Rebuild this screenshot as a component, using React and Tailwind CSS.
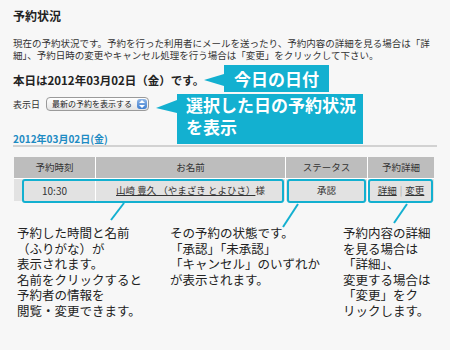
const JP = { fontFamily: '"Noto Sans CJK JP", "Liberation Sans", sans-serif' };

const Callout = ({ className, children }) => (
  <div className={`bg-[#13b0d0] text-white font-bold text-[17px] ${className}`}>{children}</div>
);

const App = () => {
  return (
    <div style={JP} className="w-[450px] h-[350px] overflow-hidden bg-[#f7f7f7] text-[#333] px-[13px]">
      <h1 className="pt-[8px] text-[12px] leading-[16px] font-bold text-[#222]">予約状況</h1>

      <p className="mt-[13px] text-[9.5px] leading-[12px] whitespace-nowrap text-[#333]">
        現在の予約状況です。予約を行った利用者にメールを送ったり、予約内容の詳細を見る場合は「詳
        <br />
        細」、予約日時の変更やキャンセル処理を行う場合は「変更」をクリックして下さい。
      </p>

      {/* today */}
      <div className="mt-[4px] flex items-center h-[27px]">
        <div className="w-[191px] pt-[3px] text-[11.5px] leading-[16px] font-bold text-[#222] whitespace-nowrap">
          本日は2012年03月02日（金）です。
        </div>
        <svg width="20" height="27" className="block shrink-0">
          <polygon points="0,15 20,9 20,21" fill="#13b0d0" />
        </svg>
        <Callout className="w-[105px] h-[27px] flex items-center justify-center leading-none">今日の日付</Callout>
      </div>

      {/* select day */}
      <div className="mt-[2px] flex items-start border-b-2 border-[#d2d2d2]">
        <div className="w-[143px]">
          <div className="mt-[3px] flex items-center h-[14px]">
            <span className="w-[33px] text-[9px] leading-none text-[#333]">表示日</span>
            <div className="relative w-[103px] h-[14px] rounded-[4px] border border-[#9a9a9a] bg-gradient-to-b from-white to-[#e4e4e4] flex items-center pl-[5px]">
              <span className="text-[8px] leading-none text-[#222] whitespace-nowrap">最新の予約を表示する</span>
              <div className="absolute right-[1px] top-[1px] w-[10px] h-[10px] rounded-[3px] bg-gradient-to-b from-[#8fb6e6] to-[#3f7fd0] flex items-center justify-center">
                <svg width="6" height="8" viewBox="0 0 6 8">
                  <polygon points="3,0 6,3 0,3" fill="#fff" />
                  <polygon points="0,5 6,5 3,8" fill="#fff" />
                </svg>
              </div>
            </div>
          </div>
          <div className="mt-[22px] text-[10px] leading-[12px] font-bold text-[#1e8bc3] whitespace-nowrap">
            2012年03月02日(金)
          </div>
        </div>
        <svg width="21" height="24" className="block shrink-0">
          <polygon points="0,14 21,6 21,19" fill="#13b0d0" />
        </svg>
        <Callout className="w-[186px] h-[50px] pl-[9px] leading-[22px] whitespace-nowrap">
          選択した日の予約状況
          <br />
          を表示
        </Callout>
      </div>

      {/* table */}
      <div className="relative mt-[10px] ml-[1px] w-[420px]">
        <div className="grid grid-cols-[81px_189px_81px_66px] grid-rows-[21px_22px] gap-px bg-white text-[9.5px] text-[#333]">
          <div className="bg-[#bdbdbd] flex items-center justify-center">予約時刻</div>
          <div className="bg-[#bdbdbd] flex items-center justify-center">お名前</div>
          <div className="bg-[#bdbdbd] flex items-center justify-center">ステータス</div>
          <div className="bg-[#bdbdbd] flex items-center justify-center">予約詳細</div>
          <div className="bg-[#e2e2e2] flex items-center justify-center text-[10px]">10:30</div>
          <div className="bg-[#e2e2e2] flex items-center justify-center whitespace-nowrap">
            <span className="underline">山崎 豊久 （やまざき とよひさ）</span>
            <span>様</span>
          </div>
          <div className="bg-[#e2e2e2] flex items-center justify-center">承認</div>
          <div className="bg-[#e2e2e2] flex items-center justify-center gap-[3px]">
            <span className="underline">詳細</span>
            <span className="text-[#aaa]">|</span>
            <span className="underline">変更</span>
          </div>
        </div>

        <div className="absolute left-[8px] top-[22px] w-[262px] h-[24px] border-2 border-[#13b0d0] rounded-[3px]" />
        <div className="absolute left-[273px] top-[22px] w-[79px] h-[24px] border-2 border-[#13b0d0] rounded-[3px]" />
        <div className="absolute left-[354px] top-[22px] w-[65px] h-[24px] border-2 border-[#13b0d0] rounded-[3px]" />

        <svg width="420" height="26" className="absolute left-0 top-[46px] overflow-visible">
          <line x1="110" y1="0" x2="97" y2="17" stroke="#13b0d0" strokeWidth="2" />
          <line x1="284" y1="1" x2="269" y2="24" stroke="#13b0d0" strokeWidth="2" />
          <line x1="393" y1="1" x2="380" y2="20" stroke="#13b0d0" strokeWidth="2" />
        </svg>
      </div>

      {/* notes */}
      <div className="mt-[24px] pl-[4px] flex text-[12.5px] leading-[15.5px] text-[#222] whitespace-nowrap">
        <div className="w-[153px]">
          予約した時間と名前
          <br />
          （ふりがな）が
          <br />
          表示されます。
          <br />
          名前をクリックすると
          <br />
          予約者の情報を
          <br />
          閲覧・変更できます。
        </div>
        <div className="w-[173px]">
          その予約の状態です。
          <br />
          「承認」「未承認」
          <br />
          「キャンセル」のいずれか
          <br />
          が表示されます。
        </div>
        <div>
          予約内容の詳細
          <br />
          を見る場合は
          <br />
          「詳細」、
          <br />
          変更する場合は
          <br />
          「変更」をク
          <br />
          リックします。
        </div>
      </div>
    </div>
  );
};

export default App;
